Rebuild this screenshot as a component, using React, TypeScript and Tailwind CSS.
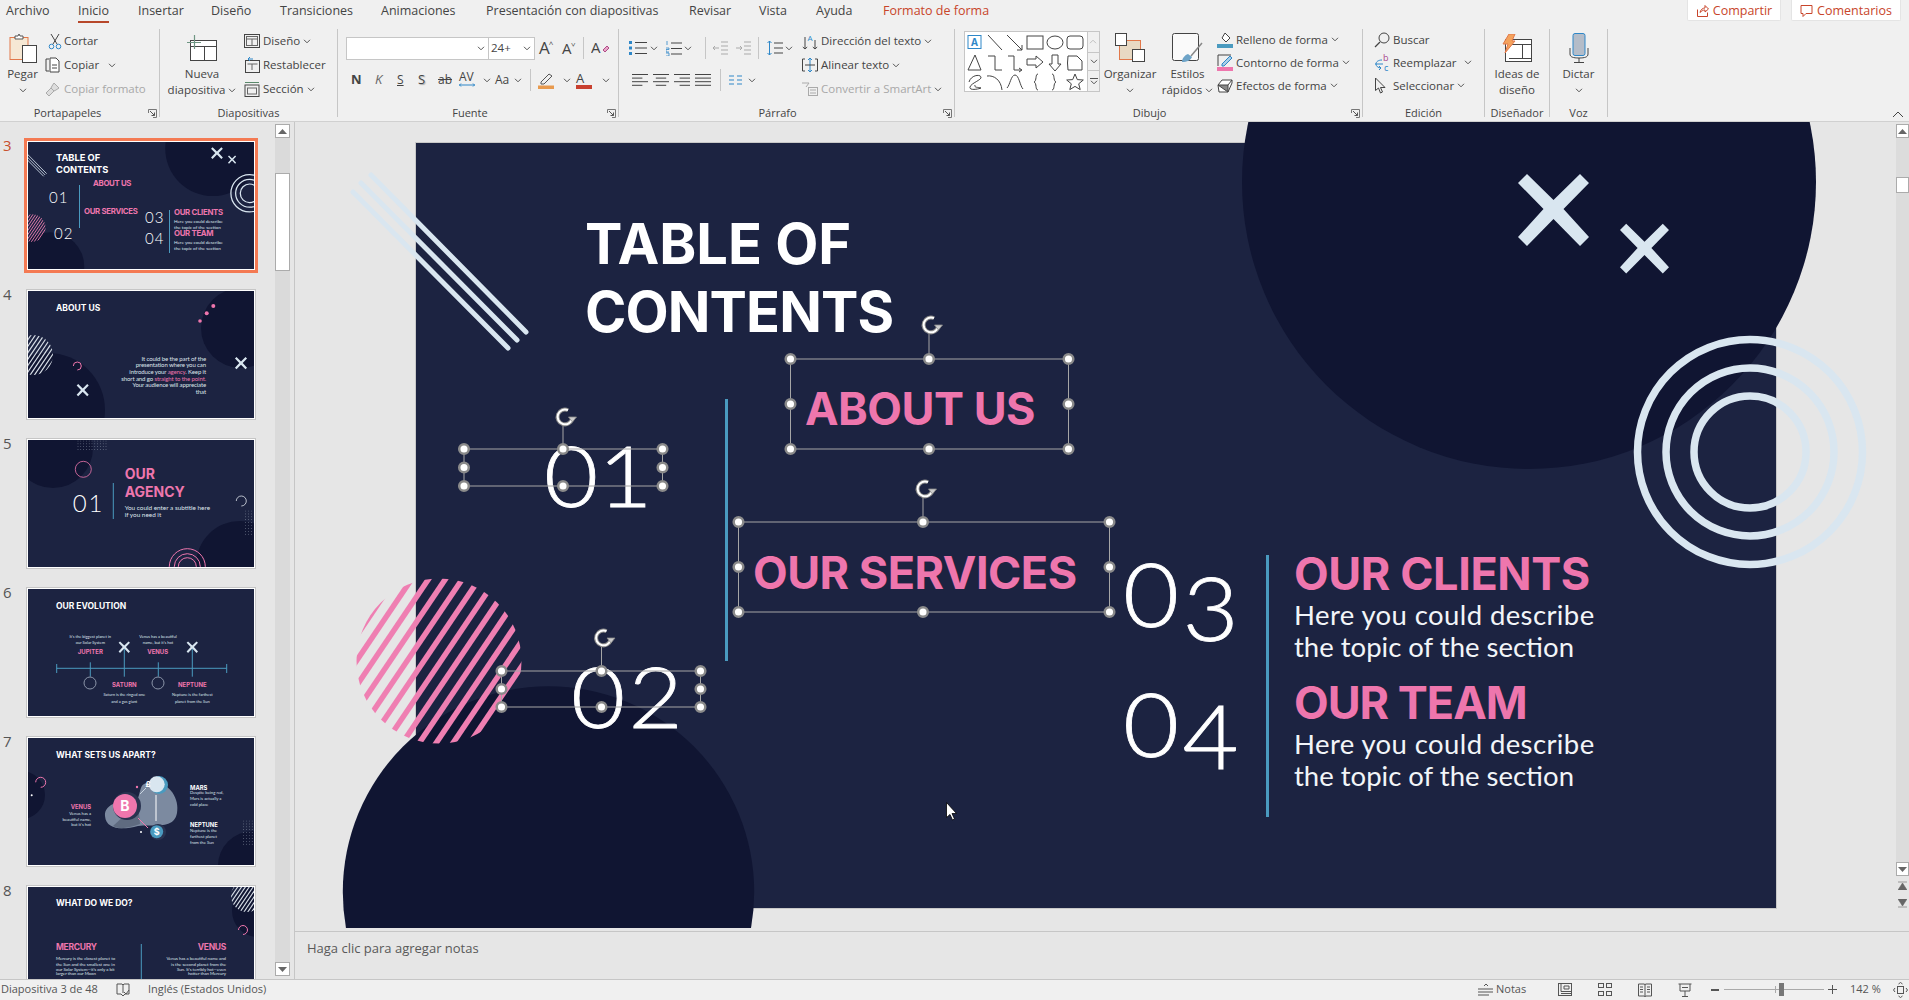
import React from 'react';

const LIGHT = '#d9e6f0';
const DARK = '#101532';
const PINK = '#ee76ad';
const BLUE = '#4a9abf';

const Chev = ({ c = '' }: { c?: string }) => (
  <svg className={`shrink-0 ${c}`} width="8" height="5" viewBox="0 0 8 5" fill="none">
    <path d="M1 .8l3 3 3-3" stroke="#555" strokeWidth="1" />
  </svg>
);
const Sep = ({ c = '' }: { c?: string }) => <span className={`block w-px h-[22px] bg-[#c6c6c6] shrink-0 ${c}`} />;

const S = ({ w, h, children, c = '' }: { w: number; h: number; children: React.ReactNode; c?: string }) => (
  <svg className={`shrink-0 ${c}`} width={w} height={h} viewBox={`0 0 ${w} ${h}`} fill="none">
    {children}
  </svg>
);

const Launcher = () => (
  <svg className="absolute right-[2px] top-[3px]" width="9" height="9" viewBox="0 0 9 9" fill="none">
    <path d="M.5 4V.5h8v8H5" stroke="#777" />
    <path d="M2 2l4.5 4.5M6.5 3.5v3h-3" stroke="#555" />
  </svg>
);

function Group({ w, label, pr = '', launcher, children }: { w: string; label: string; pr?: string; launcher?: boolean; children: React.ReactNode }) {
  return (
    <div className={`${w} h-[88px] shrink-0 border-r border-[#c6c6c6] flex flex-col`}>
      <div className="h-[77px] flex">{children}</div>
      <div className={`relative h-[11px] text-center text-[11px] leading-[14px] text-[#444] ${pr}`}>
        {label}
        {launcher && <Launcher />}
      </div>
    </div>
  );
}

function BigBtn({ w, icon, l1, l2, chev }: { w: string; icon: React.ReactNode; l1: string; l2?: string; chev?: boolean }) {
  return (
    <div className={`${w} shrink-0 flex flex-col items-center text-[11.5px] leading-[16px] text-[#444]`}>
      <div className="h-[37px] flex items-center justify-center">{icon}</div>
      <div className="whitespace-nowrap">{l1}</div>
      <div className="h-[16px] flex items-center gap-[3px] whitespace-nowrap">
        {l2}
        {chev && <Chev />}
      </div>
    </div>
  );
}

function Row({ icon, text, chev, h = 'h-[24px]', gray, gap = 'gap-[3px]', c = '' }: { icon: React.ReactNode; text: string; chev?: boolean; h?: string; gray?: boolean; gap?: string; c?: string }) {
  return (
    <div className={`${h} flex items-center text-[11.5px] whitespace-nowrap ${gray ? 'text-[#a8a8a8]' : 'text-[#444]'} ${c}`}>
      <span className="w-[19px] shrink-0 flex items-center">{icon}</span>
      <span className={`flex items-center ${gap}`}>
        {text}
        {chev && <Chev />}
      </span>
    </div>
  );
}

const Bars = ({ w, kind }: { w: number; kind: 'l' | 'c' | 'r' | 'j' }) => {
  const ws = kind === 'j' ? [1, 1, 1, 1] : [1, 0.65, 1, 0.65];
  return (
    <S w={w} h={14}>
      {ws.map((f, i) => {
        const len = w * f;
        const x = kind === 'l' || kind === 'j' ? 0 : kind === 'c' ? (w - len) / 2 : w - len;
        return <line key={i} x1={x} x2={x + len} y1={1.5 + i * 3.6} y2={1.5 + i * 3.6} stroke="#444" />;
      })}
    </S>
  );
};

const TABS: [string, string][] = [
  ['Archivo', 'w-[72px]'],
  ['Inicio', 'w-[60px]'],
  ['Insertar', 'w-[73px]'],
  ['Diseño', 'w-[69px]'],
  ['Transiciones', 'w-[101px]'],
  ['Animaciones', 'w-[105px]'],
  ['Presentación con diapositivas', 'w-[203px]'],
  ['Revisar', 'w-[70px]'],
  ['Vista', 'w-[57px]'],
  ['Ayuda', 'w-[67px]'],
];

function TabsBar() {
  return (
    <div className="flex h-[24px] shrink-0 bg-[#f0f0f0] pl-[6px] text-[12.5px] leading-[21px] text-[#444]">
      {TABS.map(([t, w]) => (
        <div key={t} className={`${w} shrink-0 whitespace-nowrap`}>
          {t === 'Inicio' ? <span className="inline-block h-[22.5px] border-b-2 border-[#b7472a]">{t}</span> : t}
        </div>
      ))}
      <div className="text-[#c8452a] whitespace-nowrap">Formato de forma</div>
      <div className="ml-auto flex gap-[10px] pr-[8px] text-[#c8452a]">
        <div className="w-[94px] h-[21px] bg-white border-b border-x border-[#e4e4e4] flex items-center justify-center gap-[4px] rounded-b-[2px]">
          <S w={13} h={13}>
            <path d="M1.5 5.5v7h10v-4" stroke="#c8452a" />
            <path d="M4 8.5C4.5 5.5 7 4 9 4V1.5l3.5 3.5L9 8V6C7 6 5.5 7 4 8.5Z" stroke="#c8452a" />
          </S>
          Compartir
        </div>
        <div className="w-[110px] h-[21px] bg-white border-b border-x border-[#e4e4e4] flex items-center justify-center gap-[4px] rounded-b-[2px]">
          <S w={13} h={13}>
            <path d="M1 1.5h11v8H6l-3 3v-3H1z" stroke="#c8452a" />
          </S>
          Comentarios
        </div>
      </div>
    </div>
  );
}

const GalleryShapes = () => (
  <svg width="122" height="59" viewBox="0 0 122 59" fill="none" stroke="#444" strokeWidth="1" className="shrink-0">
    <rect x="3" y="3.500" width="13" height="13" stroke="#2e87c8" />
    <text x="9.500" y="14" fontSize="10" fontWeight="700" fill="#2e87c8" stroke="none" textAnchor="middle" fontFamily="Open Sans, sans-serif">A</text>
    <line x1="23" y1="3" x2="37" y2="18" />
    <path d="M42 3l15 15M57 13v5h-5" />
    <rect x="62" y="4" width="16" height="13" />
    <ellipse cx="90" cy="10.500" rx="8" ry="6.500" />
    <rect x="102" y="4" width="16" height="13" rx="3" />
    <path d="M10 23l6 15H3z" />
    <path d="M23 24h7v14h7" />
    <path d="M43 24h6v14h7M54 36l3 2-3 2" />
    <path d="M62 27h9v-3l7 6-7 6v-3h-9z" />
    <path d="M87 23h6v9h3l-6 7-6-7h3z" />
    <path d="M103 24h9l5 5v9h-14q-1-7 0-14z" />
    <path d="M4 50c2-7 11-8 12-5s-10 6-11 10 9 2 11 1c-3-1-7 0-6-3" stroke="#444" />
    <path d="M22 44c7-1 14 4 15 14" />
    <path d="M42 56c3-3 4-13 8-13s5 11 8 14" />
    <path d="M73 42c-3 0-1 7-4 8 3 1 1 8 4 8" />
    <path d="M87 42c3 0 1 7 4 8-3 1-1 8-4 8" />
    <path d="M110 42l2.300 5.600 6 .4-4.600 3.800 1.500 5.800-5.200-3.200-5.200 3.200 1.500-5.800-4.600-3.800 6-.4z" />
  </svg>
);

function Ribbon() {
  return (
    <div className="relative flex h-[97px] shrink-0 bg-[#f0f0f0] pt-[5px]">
      <Group w="w-[160px]" label="Portapapeles" pr="pr-[24px]" launcher>
        <BigBtn
          w="w-[45px]"
          l1="Pegar"
          chev
          icon={
            <S w={28} h={30}>
              <rect x="1" y="4.500" width="18" height="22" fill="#f6e8d4" stroke="#e2784a" />
              <path d="M6 5V3h3l1-2 1 2h3v3H6z" fill="#fff" stroke="#555" />
              <rect x="13.500" y="12.500" width="14" height="17" fill="#fff" stroke="#444" />
            </S>
          }
        />
        <div className="flex flex-col">
          <Row
            text="Cortar"
            icon={
              <S w={14} h={17} c="ml-[3px]">
                <path d="M3 1l6 10M11 1L5 11" stroke="#444" />
                <circle cx="3.500" cy="13.500" r="2.300" stroke="#2e87c8" />
                <circle cx="10.500" cy="13.500" r="2.300" stroke="#2e87c8" />
              </S>
            }
          />
          <div className="flex items-center">
            <Row
              text="Copiar"
              icon={
                <S w={16} h={16}>
                  <path d="M4 2H1v12h3" stroke="#444" />
                  <path d="M5 1h6l3 3v11H5z" fill="#fff" stroke="#444" />
                  <path d="M7 8h5M7 11h5" stroke="#444" />
                </S>
              }
            />
            <Chev c="ml-[9px]" />
          </div>
          <Row
            text="Copiar formato"
            gray
            icon={
              <S w={16} h={16}>
                <path d="M9 2l5 5-3 2-2 1-3-3 1-2zM6 7l-5 5 3 3 5-5" stroke="#aaa" fill="#ddd" />
              </S>
            }
          />
        </div>
      </Group>

      <Group w="w-[178px]" label="Diapositivas">
        <BigBtn
          w="w-[84px]"
          l1="Nueva"
          l2="diapositiva"
          chev
          icon={
            <S w={30} h={26}>
              <rect x="3.500" y="5.500" width="26" height="20" fill="#fff" stroke="#444" />
              <path d="M3 11.500h26M17.500 11.500v14" stroke="#444" />
              <path d="M7.500 0v14M0 7.500h14" stroke="#6f9684" strokeWidth="1.200" />
            </S>
          }
        />
        <div className="flex flex-col">
          <Row
            text="Diseño"
            chev
            icon={
              <S w={16} h={14}>
                <rect x=".5" y=".5" width="15" height="13" stroke="#444" />
                <rect x="2.500" y="2.500" width="11" height="9" stroke="#666" />
                <path d="M2.500 5h11M8 5v6" stroke="#666" />
              </S>
            }
          />
          <Row
            text="Restablecer"
            icon={
              <S w={16} h={16}>
                <rect x="1.500" y="3.500" width="14" height="12" stroke="#444" />
                <path d="M4 2h5M4 2l2-2M4 2l2 2" stroke="#2e87c8" />
                <path d="M3.500 7h10M8 7v6" stroke="#666" />
              </S>
            }
          />
          <Row
            text="Sección"
            chev
            icon={
              <S w={16} h={16}>
                <path d="M1 1.500h14" stroke="#5b8a6c" />
                <rect x="1" y="4" width="14" height="11.500" stroke="#444" />
                <rect x="3.500" y="7" width="9" height="6" stroke="#666" />
              </S>
            }
          />
        </div>
      </Group>

      <Group w="w-[281px]" label="Fuente" pr="pr-[16px]" launcher>
        <div className="flex flex-col pt-[3px] text-[#444]">
          <div className="h-[32px] flex items-center pl-[8px]">
            <div className="w-[143px] h-[23px] shrink-0 bg-white border border-[#c6c6c6] flex items-center justify-end pr-[3px]">
              <Chev />
            </div>
            <div className="w-[46px] h-[23px] shrink-0 bg-white border border-l-0 border-[#c6c6c6] flex items-center justify-between pl-[2px] pr-[3px] text-[11.5px] leading-[20px]">
              <span>24+</span>
              <Chev />
            </div>
            <div className="w-[23px] ml-[4px] shrink-0 flex items-start text-[17px] leading-[18px]">
              A<span className="text-[8px] leading-[10px] -ml-px">^</span>
            </div>
            <div className="w-[21px] shrink-0 flex items-start text-[15px] leading-[18px]">
              A<span className="text-[8px] leading-[10px] rotate-180 -ml-px">^</span>
            </div>
            <Sep />
            <div className="ml-[7px]">
              <S w={18} h={18}>
                <text x="0" y="14" fontSize="15" fill="#444" fontFamily="Open Sans, sans-serif">A</text>
                <path d="M12 11l4-4 2 2-4 4z" fill="#e8a6c8" stroke="#b04a87" />
              </S>
            </div>
          </div>
          <div className="h-[32px] flex items-center pl-[13px] text-[13px]">
            <span className="w-[24px] font-bold">N</span>
            <span className="w-[22px] italic text-[#666]">K</span>
            <span className="w-[21px] underline text-[12px]">S</span>
            <span className="w-[20px] [text-shadow:1px_1px_1px_#aaa]">S</span>
            <span className="w-[21px] line-through text-[12px]">ab</span>
            <span className="w-[20px] relative">
              <span className="text-[12px] leading-none block -mt-[3px]">AV</span>
              <S w={16} h={4} c="block">
                <path d="M0 2h16M2 .5L.5 2 2 3.500M14 .5L15.500 2 14 3.500" stroke="#2e87c8" />
              </S>
            </span>
            <span className="w-[16px] flex justify-center"><Chev /></span>
            <span className="w-[19px] text-[12px]">Aa</span>
            <span className="w-[16px] flex"><Chev /></span>
            <Sep />
            <span className="w-[25px] ml-[7px]">
              <S w={18} h={18}>
                <path d="M3 11l8-8 3 2-8 8H3z" stroke="#555" />
                <rect x="0" y="14.500" width="16" height="3.500" fill="#e89a4e" />
              </S>
            </span>
            <span className="w-[13px]"><Chev /></span>
            <span className="w-[26px] flex flex-col items-start leading-[14px]">
              A
              <span className="block w-[16px] h-[4px] bg-[#c8402f]" />
            </span>
            <Chev />
          </div>
        </div>
      </Group>

      <Group w="w-[336px]" label="Párrafo" pr="pr-[18px]" launcher>
        <div className="w-[183px] shrink-0 flex flex-col pt-[3px]">
          <div className="h-[32px] flex items-center pl-[10px]">
            <span className="w-[21px]">
              <S w={18} h={14}>
                <rect x="0" y="0" width="3" height="3" fill="#2e87c8" />
                <rect x="0" y="5.500" width="3" height="3" fill="#2e87c8" />
                <rect x="0" y="11" width="3" height="3" fill="#2e87c8" />
                <path d="M6 1.500h12M6 7h12M6 12.500h12" stroke="#444" />
              </S>
            </span>
            <span className="w-[16px]"><Chev /></span>
            <span className="w-[18px]">
              <S w={16} h={15}>
                <path d="M1 0v4M0 7h3v1.500H0V11h3M0 12h3v3H0" stroke="#2e87c8" strokeWidth=".8" />
                <path d="M5 2h11M5 7.500h11M5 13h11" stroke="#444" />
              </S>
            </span>
            <span className="w-[21px]"><Chev /></span>
            <Sep />
            <span className="w-[23px] ml-[7px]">
              <S w={15} h={14}>
                <path d="M0 7h6M0 7l2-2M0 7l2 2M8 1h7M8 5h7M8 9h7M8 13h7" stroke="#aaa" />
              </S>
            </span>
            <span className="w-[22px]">
              <S w={15} h={14}>
                <path d="M0 7h6M6 7L4 5M6 7L4 9M8 1h7M8 5h7M8 9h7M8 13h7" stroke="#aaa" />
              </S>
            </span>
            <Sep />
            <span className="w-[18px] ml-[8px]">
              <S w={16} h={16}>
                <path d="M2.500 1v14M.5 3l2-2 2 2M.5 13l2 2 2-2" stroke="#2e87c8" />
                <path d="M7 3h9M7 8h9M7 13h9" stroke="#444" />
              </S>
            </span>
            <Chev />
          </div>
          <div className="h-[32px] flex items-center pl-[13px]">
            <span className="w-[21px]"><Bars w={16} kind="l" /></span>
            <span className="w-[21px]"><Bars w={16} kind="c" /></span>
            <span className="w-[21px]"><Bars w={16} kind="r" /></span>
            <span className="w-[25px]"><Bars w={16} kind="j" /></span>
            <Sep />
            <span className="w-[19px] ml-[8px]">
              <S w={13} h={10}>
                <path d="M0 1h5M0 5h5M0 9h5M8 1h5M8 5h5M8 9h5" stroke="#2e87c8" />
              </S>
            </span>
            <Chev />
          </div>
        </div>
        <div className="flex flex-col">
          <Row
            text="Dirección del texto"
            chev
            icon={
              <S w={16} h={17}>
                <path d="M3 4v12M.8 14l2.200 2 2.200-2M13 7v9M10.800 14l2.200 2 2.200-2" stroke="#444" />
                <text x="8" y="8" fontSize="8" fill="#2e87c8" textAnchor="middle" fontFamily="Open Sans, sans-serif">A</text>
              </S>
            }
          />
          <Row
            text="Alinear texto"
            chev
            icon={
              <S w={16} h={16}>
                <path d="M3 2H.5v12H3M13 2h2.500v12H13" stroke="#444" />
                <path d="M8 1v14M6 3l2-2 2 2M6 13l2 2 2-2" stroke="#2e87c8" />
                <path d="M3 8h10" stroke="#444" />
              </S>
            }
          />
          <Row
            text="Convertir a SmartArt"
            chev
            gray
            icon={
              <S w={16} h={14}>
                <path d="M0 1h7L4 5" stroke="#aaa" />
                <rect x="6.500" y="5.500" width="9" height="8" stroke="#aaa" />
                <path d="M8 8h6M8 11h6" stroke="#aaa" />
              </S>
            }
          />
        </div>
      </Group>

      <Group w="w-[408px]" label="Dibujo" pr="pr-[18px]" launcher>
        <div className="ml-[9px] mt-[2px] h-[61px] w-[136px] shrink-0 bg-white border border-[#c6c6c6] flex">
          <GalleryShapes />
          <div className="w-[13px] flex flex-col border-l border-[#c6c6c6] bg-[#f0f0f0]">
            <div className="h-[20px] flex items-center justify-center rotate-180"><Chev c="opacity-30" /></div>
            <div className="h-[19px] flex items-center justify-center border-y border-[#c6c6c6]"><Chev /></div>
            <div className="flex-1 flex flex-col items-center justify-center gap-px">
              <span className="block w-[8px] h-px bg-[#555]" />
              <Chev />
            </div>
          </div>
        </div>
        <BigBtn
          w="w-[60px]"
          l1="Organizar"
          chev
          icon={
            <S w={30} h={29}>
              <rect x="4.500" y="7.500" width="21" height="19" fill="#e8d9c3" stroke="#e2784a" />
              <rect x=".5" y=".5" width="11" height="12" fill="#fff" stroke="#444" />
              <rect x="17.500" y="16.500" width="12" height="12" fill="#fff" stroke="#444" />
            </S>
          }
        />
        <BigBtn
          w="w-[55px]"
          l1="Estilos"
          l2="rápidos"
          chev
          icon={
            <S w={31} h={30}>
              <rect x=".5" y=".5" width="26" height="27" rx="2" fill="#fafafa" stroke="#444" />
              <path d="M30 10L19 23" stroke="#888" strokeWidth="1.500" />
              <path d="M10 29c0-4 3-7 6-8l4 3c-1 3-5 5-10 5z" fill="#6ea4c8" />
            </S>
          }
        />
        <div className="ml-[2px] -mt-[1px] flex flex-col">
          <Row
            h="h-[23px]"
            text="Relleno de forma"
            chev
            icon={
              <S w={16} h={16}>
                <path d="M8 1l5 5-4 4-4-4z" fill="#fff" stroke="#444" />
                <rect x="0" y="12" width="16" height="4" fill="#4a9abf" />
              </S>
            }
          />
          <Row
            h="h-[23px]"
            text="Contorno de forma"
            chev
            icon={
              <S w={16} h={17}>
                <path d="M1 1h13" stroke="#444" />
                <path d="M1 1v11" stroke="#444" />
                <path d="M5 10l8-8 2 2-8 8H5z" fill="#a8cfe8" stroke="#2e87c8" />
                <rect x="0" y="13" width="16" height="4" fill="#ee76ad" />
              </S>
            }
          />
          <Row
            h="h-[23px]"
            text="Efectos de forma"
            chev
            icon={
              <S w={16} h={14}>
                <path d="M1 6l4-5h10v3l-4 9H2z" fill="#fff" stroke="#444" />
                <path d="M1 6h10v7zM11 6l4-5" stroke="#444" fill="#888" />
              </S>
            }
          />
        </div>
      </Group>

      <Group w="w-[122px]" label="Edición">
        <div className="ml-[11px] -mt-[1px] flex flex-col">
          <Row
            h="h-[23px]"
            text="Buscar"
            icon={
              <S w={16} h={16}>
                <circle cx="10" cy="6" r="5" stroke="#444" />
                <path d="M6 10l-5 5" stroke="#444" strokeWidth="1.200" />
              </S>
            }
          />
          <div className="flex items-center">
            <Row
              h="h-[23px]"
              text="Reemplazar"
              icon={
                <S w={16} h={18}>
                  <path d="M8 6c-4 0-6 2-6 4s2 4 5 4M5 12l2 2-2 2M1 10h8" stroke="#2e87c8" />
                  <text x="9" y="7" fontSize="9" fill="#a8488c" fontFamily="Open Sans, sans-serif">b</text>
                  <text x="10" y="17" fontSize="9" fill="#2e87c8" fontFamily="Open Sans, sans-serif">c</text>
                </S>
              }
            />
            <Chev c="ml-[8px]" />
          </div>
          <Row
            h="h-[23px]"
            text="Seleccionar"
            chev
            icon={
              <S w={12} h={18}>
                <path d="M1.500 1v12.500l3-2.500 2 5 2-1-2-4.500H11z" stroke="#444" />
              </S>
            }
          />
        </div>
      </Group>

      <Group w="w-[65px]" label="Diseñador">
        <BigBtn
          w="w-full"
          l1="Ideas de"
          l2="diseño"
          icon={
            <S w={30} h={28}>
              <rect x="3.500" y="5.500" width="26" height="22" fill="#fff" stroke="#444" />
              <path d="M10 10.500h19M20.500 10.500v14M7 24.500h22" stroke="#444" />
              <path d="M7 0h6l-3 7h3L3 19l3-9H1z" fill="#f4a25c" stroke="#e2784a" />
            </S>
          }
        />
      </Group>

      <Group w="w-[58px]" label="Voz">
        <BigBtn
          w="w-full"
          l1="Dictar"
          chev
          icon={
            <S w={20} h={30}>
              <rect x="4" y=".5" width="12" height="22" rx="2" fill="#b4bcc8" stroke="#2e87c8" />
              <path d="M1 15v6c0 3 3 4 9 4s9-1 9-4v-6M10 25v4M5 29.500h10" stroke="#444" />
            </S>
          }
        />
      </Group>

      <div className="absolute right-[5px] bottom-[3px]">
        <S w={12} h={7}>
          <path d="M1 6l5-5 5 5" stroke="#444" />
        </S>
      </div>
    </div>
  );
}

const Tri = ({ down }: { down?: boolean }) => (
  <S w={9} h={5} c={down ? 'rotate-180' : ''}>
    <path d="M4.500 0L9 5H0z" fill="#666" />
  </S>
);

const Xm = ({ cx, cy, s, fill = LIGHT }: { cx: number; cy: number; s: number; fill?: string }) => {
  const pts = [[-35.5, -26], [-26.5, -35], [0, -9], [26.5, -35], [35.5, -26], [10, 0], [35.5, 28], [26.5, 37], [0, 10], [-26.5, 37], [-35.5, 28], [-10, 0]];
  return <polygon fill={fill} points={pts.map(([x, y]) => `${cx + x * s},${cy + y * s}`).join(' ')} />;
};

function Stripes({ id, cx, cy, r, color, p, w }: { id: string; cx: number; cy: number; r: number; color: string; p: number; w: number }) {
  const a = (56 * Math.PI) / 180;
  const nx = Math.sin(a);
  const ny = Math.cos(a);
  const dx = Math.cos(a);
  const dy = -Math.sin(a);
  const ds: number[] = [];
  for (let d = -r; d <= r; d += p) ds.push(d);
  return (
    <g>
      <clipPath id={id}>
        <circle cx={cx} cy={cy} r={r} />
      </clipPath>
      <g clipPath={`url(#${id})`} stroke={color} strokeWidth={w}>
        {ds.map((d) => (
          <line key={d} x1={cx + nx * d - dx * r * 1.2} y1={cy + ny * d - dy * r * 1.2} x2={cx + nx * d + dx * r * 1.2} y2={cy + ny * d + dy * r * 1.2} />
        ))}
      </g>
    </g>
  );
}

const Arc = ({ cx, cy, r, color, w = 1 }: { cx: number; cy: number; r: number; color: string; w?: number }) => (
  <path d={`M${cx - r} ${cy} A${r} ${r} 0 1 1 ${cx} ${cy + r}`} stroke={color} strokeWidth={w} fill="none" />
);

const Dots = ({ x, y, cols, rows, step, r = 0.35, color = '#c8d4e0' }: { x: number; y: number; cols: number; rows: number; step: number; r?: number; color?: string }) => (
  <g fill={color}>
    {Array.from({ length: cols * rows }).map((_, i) => (
      <circle key={i} cx={x + (i % cols) * step} cy={y + Math.floor(i / cols) * step} r={r} />
    ))}
  </g>
);

function Slide3Deco({ id }: { id: string }) {
  return (
    <>
      <circle cx="1529" cy="182" r="287" fill={DARK} />
      <circle cx="548.500" cy="892" r="205.700" fill={DARK} />
      <g stroke={LIGHT} strokeWidth="5" strokeLinecap="round">
        <line x1="371" y1="175" x2="526" y2="332" />
        <line x1="361" y1="183" x2="517" y2="340" />
        <line x1="353" y1="192" x2="508" y2="348" />
      </g>
      <Stripes id={id} cx={439} cy={661} r={82.5} color="#ef7fb2" p={14} w={5.5} />
      <g stroke={LIGHT} strokeWidth="7.500" fill="none">
        <circle cx="1750" cy="452" r="112.500" />
        <circle cx="1750" cy="452" r="84" />
        <circle cx="1750" cy="452" r="56" />
      </g>
      <Xm cx={1553.5} cy={209} s={1} />
      <Xm cx={1644.5} cy={248} s={0.69} />
    </>
  );
}

function Frame({ x1, y1, x2, y2, cx, ry }: { x1: number; y1: number; x2: number; y2: number; cx: number; ry: number }) {
  const my = (y1 + y2) / 2;
  const hs = [[x1, y1], [cx, y1], [x2, y1], [x1, my], [x2, my], [x1, y2], [cx, y2], [x2, y2]];
  return (
    <g>
      <rect x={x1} y={y1} width={x2 - x1} height={y2 - y1} fill="none" stroke="#a6a6a6" strokeWidth="1" />
      <line x1={cx} y1={y1} x2={cx} y2={ry + 8} stroke="#a6a6a6" />
      <g transform={`translate(${cx + 2} ${ry})`} fill="none">
        <path d="M3 -6.800 A7.400 7.400 0 1 0 7.200 1.500" stroke="#8a8a8a" strokeWidth="4" />
        <path d="M3 -6.800 A7.400 7.400 0 1 0 7.200 1.500" stroke="#fff" strokeWidth="2" />
        <path d="M3.500 0h8l-4 5z" fill="#ccc" stroke="#888" strokeWidth=".8" />
      </g>
      {hs.map(([x, y], i) => (
        <circle key={i} cx={x} cy={y} r="4.800" fill="#fff" stroke="#8a8a8a" strokeWidth="2.500" />
      ))}
    </g>
  );
}

const H = "absolute leading-none whitespace-nowrap font-['Inter',sans-serif] font-bold";
const B = "absolute leading-none whitespace-nowrap font-['Lato',sans-serif]";
const NUM = "absolute leading-none whitespace-nowrap font-['Lato',sans-serif] font-light text-white origin-left scale-x-[1.1] [-webkit-text-stroke:0.8px_white]";
const TW = "absolute leading-none whitespace-nowrap -translate-y-1/2 text-white font-['Inter',sans-serif] font-bold";
const TP = "absolute leading-none whitespace-nowrap -translate-y-1/2 text-[#ee76ad] font-['Inter',sans-serif] font-bold";
const TD = "absolute leading-none whitespace-nowrap -translate-y-1/2 text-[#dfe5ec] font-['Lato',sans-serif]";
const TN = "absolute leading-none whitespace-nowrap -translate-y-1/2 text-white font-['Lato',sans-serif] font-light tracking-[1px]";
const CX = '-translate-x-1/2';

function Canvas() {
  return (
    <div className="absolute left-[-295px] top-[-122px] w-[1909px] h-[1000px]">
      <div className="absolute left-[416px] top-[143px] w-[1360px] h-[765px] bg-[#1c2341] outline outline-1 outline-[#c8c8c8]" />
      <svg className="absolute left-0 top-0" width="1909" height="1000" viewBox="0 0 1909 1000">
        <Slide3Deco id="main-stripes" />
      </svg>
      <div className={`${H} left-[585px] top-[216px] text-[56px] text-white`}>TABLE OF</div>
      <div className={`${H} left-[585px] top-[284px] text-[56px] text-white tracking-[-0.9px]`}>CONTENTS</div>
      <div className="absolute left-[725px] top-[399px] w-[3px] h-[262px] bg-[#4a9abf]" />
      <div className="absolute left-[1266px] top-[555px] w-[3px] h-[262px] bg-[#4a9abf]" />
      <div className={`${H} left-[805px] top-[386px] text-[45px] text-[#ee76ad] tracking-[-0.5px]`}>ABOUT US</div>
      <div className={`${H} left-[753px] top-[550px] text-[45px] text-[#ee76ad] tracking-[-0.5px]`}>OUR SERVICES</div>
      <div className={`${H} left-[1294px] top-[551px] text-[45px] text-[#ee76ad] tracking-[-0.4px]`}>OUR CLIENTS</div>
      <div className={`${H} left-[1294px] top-[680px] text-[45px] text-[#ee76ad] tracking-[-1px]`}>OUR TEAM</div>
      <div className={`${B} left-[1294px] top-[601px] text-[27.5px] text-[#f2f5f8] tracking-[0.4px]`}>Here you could describe</div>
      <div className={`${B} left-[1294px] top-[633px] text-[27.5px] text-[#f2f5f8]`}>the topic of the section</div>
      <div className={`${B} left-[1294px] top-[730px] text-[27.5px] text-[#f2f5f8] tracking-[0.4px]`}>Here you could describe</div>
      <div className={`${B} left-[1294px] top-[762px] text-[27.5px] text-[#f2f5f8]`}>the topic of the section</div>
      <div className={`${NUM} left-[544px] top-[432px] text-[85px]`}>01</div>
      <div className={`${NUM} left-[571px] top-[653px] text-[85px] tracking-[3px]`}>02</div>
      <div className={`${NUM} left-[1123px] top-[549px] text-[88px] tracking-[3px]`}>
        0<span className="relative top-[14px]">3</span>
      </div>
      <div className={`${NUM} left-[1123px] top-[679px] text-[88px] tracking-[3px]`}>
        0<span className="relative top-[12px]">4</span>
      </div>
      <svg className="absolute left-0 top-0" width="1909" height="1000" viewBox="0 0 1909 1000">
        <Frame x1={790.5} y1={359} x2={1068.5} y2={449} cx={929} ry={325} />
        <Frame x1={464} y1={449} x2={662.5} y2={486} cx={563} ry={417} />
        <Frame x1={738.5} y1={522} x2={1109.5} y2={612} cx={923} ry={489} />
        <Frame x1={501.5} y1={671} x2={700.5} y2={707} cx={601.5} ry={638} />
        <path d="M946.500 802.500v15l3.500-3 2.500 5.500 2-1-2.500-5.500h4.500z" fill="#fff" stroke="#000" strokeWidth=".8" />
      </svg>
    </div>
  );
}

function ThumbBox({ n, active, children }: { n: number; active?: boolean; children: React.ReactNode }) {
  return (
    <div className="flex h-[149px] shrink-0 pl-[3px]">
      <div className={`w-[21px] -mt-[3px] text-[15px] leading-[20px] ${active ? 'text-[#c8502f]' : 'text-[#555]'}`}>{n}</div>
      <div className={active ? 'h-[135px] border-[3px] border-[#f47a53] p-px bg-white' : 'ml-[2px] mt-[2px] h-[131px] border border-[#c6c6c6] p-px bg-white'}>
        <div className="relative w-[226px] h-[127px] overflow-hidden bg-[#1c2341]">{children}</div>
      </div>
    </div>
  );
}

const TS = ({ children }: { children: React.ReactNode }) => (
  <svg className="absolute left-0 top-0" width="226" height="127" viewBox="0 0 226 127" fill="none">
    {children}
  </svg>
);

function Thumb3() {
  return (
    <>
      <svg className="absolute left-0 top-0" width="226" height="127" viewBox="416 143 1360 765">
        <Slide3Deco id="t3-stripes" />
      </svg>
      <div className={`${TW} left-[28px] top-[16px] text-[9.3px]`}>TABLE OF</div>
      <div className={`${TW} left-[28px] top-[28px] text-[9.3px]`}>CONTENTS</div>
      <div className={`${TP} left-[65px] top-[42px] text-[7.8px] tracking-[-0.3px]`}>ABOUT US</div>
      <div className={`${TP} left-[56px] top-[70px] text-[7.8px] tracking-[-0.3px]`}>OUR SERVICES</div>
      <div className={`${TP} left-[146px] top-[71px] text-[7.8px] tracking-[-0.3px]`}>OUR CLIENTS</div>
      <div className={`${TP} left-[146px] top-[92px] text-[7.8px] tracking-[-0.3px]`}>OUR TEAM</div>
      <div className={`${TN} left-[21px] top-[55px] text-[15px]`}>01</div>
      <div className={`${TN} left-[26px] top-[91px] text-[15px]`}>02</div>
      <div className={`${TN} left-[117px] top-[75px] text-[15px]`}>03</div>
      <div className={`${TN} left-[117px] top-[96px] text-[15px]`}>04</div>
      <div className="absolute left-[51px] top-[43px] w-[1px] h-[43px] bg-[#4a9abf]" />
      <div className="absolute left-[141px] top-[68px] w-[1px] h-[43px] bg-[#4a9abf]" />
      <div className={`${TD} left-[146px] top-[79px] text-[4.6px]`}>Here you could describe</div>
      <div className={`${TD} left-[146px] top-[85px] text-[4.6px]`}>the topic of the section</div>
      <div className={`${TD} left-[146px] top-[100px] text-[4.6px]`}>Here you could describe</div>
      <div className={`${TD} left-[146px] top-[105.5px] text-[4.6px]`}>the topic of the section</div>
    </>
  );
}

function Thumb4() {
  return (
    <>
      <TS>
        <circle cx="213" cy="37" r="40" fill={DARK} />
        <circle cx="20" cy="119" r="57" fill={DARK} />
        <Stripes id="t4-stripes" cx={5} cy={64} r={20} color="#d9e0e8" p={3.6} w={1.2} />
        <circle cx="185.300" cy="15" r="2" fill={PINK} />
        <circle cx="178.700" cy="22.300" r="2" fill={PINK} />
        <circle cx="172" cy="30" r="1.800" fill={PINK} />
        <Arc cx={49.3} cy={75} r={4} color={PINK} />
        <Xm cx={54.7} cy={99} s={0.17} />
        <Xm cx={213} cy={72} s={0.17} />
      </TS>
      <div className={`${TW} left-[28px] top-[16.700px] text-[8.500px]`}>ABOUT US</div>
      <div className={`${TD} right-[48px] top-[67.500px] text-[6px] tracking-[-0.1px]`}>It could be the part of the</div>
      <div className={`${TD} right-[48px] top-[73.500px] text-[6px] tracking-[-0.1px]`}>presentation where you can</div>
      <div className={`${TD} right-[48px] top-[80.500px] text-[6px] tracking-[-0.1px]`}>
        introduce your <span className="text-[#ee76ad]">agency</span>. Keep it
      </div>
      <div className={`${TD} right-[48px] top-[87.500px] text-[6px] tracking-[-0.1px]`}>
        short and go <span className="text-[#ee76ad]">straight to the point.</span>
      </div>
      <div className={`${TD} right-[48px] top-[94px] text-[6px] tracking-[-0.1px]`}>Your audience will appreciate</div>
      <div className={`${TD} right-[48px] top-[101px] text-[6px] tracking-[-0.1px]`}>that</div>
    </>
  );
}

function Thumb5() {
  return (
    <>
      <TS>
        <circle cx="25" cy="8" r="40" fill={DARK} />
        <circle cx="212" cy="125" r="44" fill={DARK} />
        <Dots x={50} y={1} cols={11} rows={4} step={2.800} />
        <circle cx="55.300" cy="29.300" r="8" stroke={PINK} strokeWidth=".8" />
        <Arc cx={213.3} cy={61} r={5} color="#dfe5ec" w={0.8} />
        <Dots x={217.500} y={71} cols={3} rows={9} step={2.900} />
        <g stroke={PINK} strokeWidth="1">
          <circle cx="159.300" cy="126.700" r="18" />
          <circle cx="159.300" cy="126.700" r="13" />
          <circle cx="159.300" cy="126.700" r="9" />
        </g>
        <line x1="85.300" y1="43" x2="85.300" y2="79" stroke={BLUE} />
      </TS>
      <div className={`${TN} left-[44.700px] top-[62.700px] text-[24px] tracking-[2px]`}>01</div>
      <div className={`${TP} left-[96.700px] top-[34.300px] text-[14px]`}>OUR</div>
      <div className={`${TP} left-[96.700px] top-[52.300px] text-[14px]`}>AGENCY</div>
      <div className={`${TD} left-[96.700px] top-[68.300px] text-[6.400px]`}>You could enter a subtitle here</div>
      <div className={`${TD} left-[96.700px] top-[74.700px] text-[6.400px]`}>if you need it</div>
    </>
  );
}

function Thumb6() {
  return (
    <>
      <TS>
        <g stroke={BLUE}>
          <line x1="28.700" y1="79.300" x2="198.700" y2="79.300" />
          <line x1="28.700" y1="75" x2="28.700" y2="84" />
          <line x1="198.700" y1="75" x2="198.700" y2="84" />
          <line x1="62.300" y1="73.300" x2="62.300" y2="87.700" />
          <line x1="96.300" y1="57.700" x2="96.300" y2="87.700" />
          <line x1="130.300" y1="73.300" x2="130.300" y2="87.700" />
          <line x1="164.300" y1="57.700" x2="164.300" y2="87.700" />
        </g>
        <circle cx="62" cy="94" r="6" stroke="#8a94a8" />
        <circle cx="130" cy="94" r="6" stroke="#8a94a8" />
        <Xm cx={96.3} cy={58} s={0.16} />
        <Xm cx={164.3} cy={58} s={0.16} />
      </TS>
      <div className={`${TW} left-[28px] top-[16.700px] text-[8.500px]`}>OUR EVOLUTION</div>
      <div className={`${TP} ${CX} left-[62.300px] top-[63.300px] text-[6px]`}>JUPITER</div>
      <div className={`${TP} ${CX} left-[96.300px] top-[96.300px] text-[6px]`}>SATURN</div>
      <div className={`${TP} ${CX} left-[129.700px] top-[63.300px] text-[6px]`}>VENUS</div>
      <div className={`${TP} ${CX} left-[164.300px] top-[96.300px] text-[6px]`}>NEPTUNE</div>
      <div className={`${TD} ${CX} left-[62.300px] top-[48.300px] text-[4px]`}>It's the biggest planet in</div>
      <div className={`${TD} ${CX} left-[62.300px] top-[54.300px] text-[4px]`}>our Solar System</div>
      <div className={`${TD} ${CX} left-[130px] top-[48.300px] text-[4px]`}>Venus has a beautiful</div>
      <div className={`${TD} ${CX} left-[130px] top-[54.300px] text-[4px]`}>name, but it's hot</div>
      <div className={`${TD} ${CX} left-[96.300px] top-[106.300px] text-[4px]`}>Saturn is the ringed one</div>
      <div className={`${TD} ${CX} left-[96.300px] top-[112.600px] text-[4px]`}>and a gas giant</div>
      <div className={`${TD} ${CX} left-[164.300px] top-[106.300px] text-[4px]`}>Neptune is the farthest</div>
      <div className={`${TD} ${CX} left-[164.300px] top-[112.600px] text-[4px]`}>planet from the Sun</div>
    </>
  );
}

function Thumb7() {
  return (
    <>
      <TS>
        <circle cx="-7" cy="57" r="24" fill={DARK} />
        <circle cx="225" cy="128" r="35" fill={DARK} />
        <Dots x={215.500} y={83} cols={4} rows={9} step={2.900} />
        <Arc cx={12.7} cy={44.3} r={5} color={PINK} />
        <circle cx="3.700" cy="57.300" r="1" fill="#fff" />
        <path d="M118 45C140 40 152 60 149 75C146 92 125 86 110 88C95 92 78 92 77 78C76 65 95 62 110 60C113 52 112 47 118 45Z" fill="#7c8aa0" />
        <path d="M85 88L110 65L112 86C100 90 92 92 85 88Z" fill="#5f6b80" />
        <circle cx="99" cy="68" r="14" fill="#2a3350" />
        <circle cx="97" cy="68" r="12" fill={PINK} />
        <circle cx="131" cy="47" r="9" fill="#4a9abf" />
        <circle cx="128.700" cy="46.300" r="8" fill={LIGHT} />
        <circle cx="130" cy="94" r="8" fill="#2a3350" />
        <circle cx="128.700" cy="93.700" r="6.500" fill="#4a9abf" />
        <line x1="128" y1="57" x2="128" y2="83" stroke="#fff" />
        <line x1="110" y1="80" x2="120" y2="90" stroke={PINK} />
        <line x1="112" y1="56" x2="118" y2="50" stroke="#c8d4e0" />
        <circle cx="109" cy="49" r="1.200" fill={PINK} />
        <circle cx="113" cy="94" r="1" fill="#fff" />
        <text x="97" y="73" fontSize="14" fontWeight="700" fill="#fff" textAnchor="middle" fontFamily="Inter, sans-serif">B</text>
        <text x="128.700" y="97" fontSize="9" fontWeight="700" fill="#fff" textAnchor="middle" fontFamily="Inter, sans-serif">$</text>
        <text x="120" y="49" fontSize="8" fontWeight="700" fill="#fff" textAnchor="middle" fontFamily="Inter, sans-serif">£</text>
      </TS>
      <div className={`${TW} left-[28px] top-[16.700px] text-[8.500px]`}>WHAT SETS US APART?</div>
      <div className={`${TP} right-[163px] top-[69.300px] text-[5.800px]`}>VENUS</div>
      <div className={`${TD} right-[163px] top-[75.700px] text-[4.200px]`}>Venus has a</div>
      <div className={`${TD} right-[163px] top-[81.700px] text-[4.200px]`}>beautiful name,</div>
      <div className={`${TD} right-[163px] top-[87px] text-[4.200px]`}>but it's hot</div>
      <div className={`${TW} left-[162px] top-[49.700px] text-[5.800px] text-[#dfe5ec]`}>MARS</div>
      <div className={`${TD} left-[162px] top-[55.300px] text-[4.200px]`}>Despite being red,</div>
      <div className={`${TD} left-[162px] top-[61.300px] text-[4.200px]`}>Mars is actually a</div>
      <div className={`${TD} left-[162px] top-[66.700px] text-[4.200px]`}>cold place</div>
      <div className={`${TW} left-[162px] top-[87.300px] text-[5.800px] text-[#4a9abf]`}>NEPTUNE</div>
      <div className={`${TD} left-[162px] top-[93.300px] text-[4.200px]`}>Neptune is the</div>
      <div className={`${TD} left-[162px] top-[99px] text-[4.200px]`}>farthest planet</div>
      <div className={`${TD} left-[162px] top-[104.700px] text-[4.200px]`}>from the Sun</div>
    </>
  );
}

function Thumb8() {
  return (
    <>
      <TS>
        <circle cx="230" cy="24" r="26" fill={DARK} />
        <Stripes id="t8-stripes" cx={219} cy={9} r={16} color="#d9e0e8" p={3.2} w={1.1} />
        <Arc cx={215} cy={43} r={4.5} color={PINK} />
        <line x1="113.300" y1="57" x2="113.300" y2="127" stroke={BLUE} />
      </TS>
      <div className={`${TW} left-[28px] top-[16.300px] text-[8.500px]`}>WHAT DO WE DO?</div>
      <div className={`${TP} left-[28px] top-[59.700px] text-[8.500px] tracking-[-0.3px]`}>MERCURY</div>
      <div className={`${TP} right-[28px] top-[59.700px] text-[8.500px] tracking-[-0.3px]`}>VENUS</div>
      <div className={`${TD} left-[28px] top-[71.700px] text-[4.300px]`}>Mercury is the closest planet to</div>
      <div className={`${TD} left-[28px] top-[77.700px] text-[4.300px]`}>the Sun and the smallest one in</div>
      <div className={`${TD} left-[28px] top-[82.700px] text-[4.300px]`}>our Solar System—it's only a bit</div>
      <div className={`${TD} left-[28px] top-[87.300px] text-[4.300px]`}>larger than our Moon</div>
      <div className={`${TD} right-[28px] top-[71.700px] text-[4.300px]`}>Venus has a beautiful name and</div>
      <div className={`${TD} right-[28px] top-[77.700px] text-[4.300px]`}>is the second planet from the</div>
      <div className={`${TD} right-[28px] top-[82.700px] text-[4.300px]`}>Sun. It's terribly hot—even</div>
      <div className={`${TD} right-[28px] top-[87.300px] text-[4.300px]`}>hotter than Mercury</div>
    </>
  );
}

function SlidePanel() {
  return (
    <aside className="w-[295px] shrink-0 flex border-r border-[#c6c6c6] bg-[#e6e6e6]">
      <div className="w-[275px] shrink-0 pt-[16px] flex flex-col overflow-hidden">
        <ThumbBox n={3} active><Thumb3 /></ThumbBox>
        <ThumbBox n={4}><Thumb4 /></ThumbBox>
        <ThumbBox n={5}><Thumb5 /></ThumbBox>
        <ThumbBox n={6}><Thumb6 /></ThumbBox>
        <ThumbBox n={7}><Thumb7 /></ThumbBox>
        <ThumbBox n={8}><Thumb8 /></ThumbBox>
      </div>
      <div className="w-[15px] shrink-0 mt-[2px] mb-[3px] bg-[#dadada] flex flex-col">
        <div className="h-[14px] bg-white border border-[#ababab] flex items-center justify-center shrink-0"><Tri /></div>
        <div className="mt-[35px] h-[98px] bg-white border border-[#ababab] shrink-0" />
        <div className="mt-auto h-[14px] bg-white border border-[#ababab] flex items-center justify-center shrink-0"><Tri down /></div>
      </div>
    </aside>
  );
}

function RightScroll() {
  return (
    <div className="w-[13px] shrink-0 flex flex-col pt-[2px]">
      <div className="h-[752px] bg-[#dcdcdc] flex flex-col">
        <div className="h-[14px] bg-white border border-[#ababab] flex items-center justify-center shrink-0"><Tri /></div>
        <div className="mt-[39px] h-[16px] bg-white border border-[#ababab] shrink-0" />
        <div className="mt-auto h-[14px] bg-white border border-[#ababab] flex items-center justify-center shrink-0"><Tri down /></div>
      </div>
      <div className="flex flex-col items-center pt-[5px] gap-[9px]">
        <S w={9} h={9}>
          <path d="M0 1h9M4.500 2L9 9H0z" fill="#666" stroke="#666" strokeWidth=".6" />
        </S>
        <S w={9} h={9}>
          <path d="M0 8h9M4.500 7L9 0H0z" fill="#666" stroke="#666" strokeWidth=".6" />
        </S>
      </div>
    </div>
  );
}

function StatusBar() {
  return (
    <div className="h-[21px] shrink-0 flex items-center pb-px bg-[#f0f0f0] border-t border-[#c6c6c6] text-[11px] text-[#555] whitespace-nowrap">
      <span className="w-[116px] pl-px">Diapositiva 3 de 48</span>
      <span className="w-[32px]">
        <S w={14} h={14}>
          <path d="M1 1h5l1 1 1-1h5v10H9l-2 2-2-2H1zM7 2v8" stroke="#555" />
          <path d="M8 9l2 2 3-4" stroke="#555" />
        </S>
      </span>
      <span>Inglés (Estados Unidos)</span>
      <div className="ml-auto flex items-center">
        <span className="w-[18px]">
          <S w={15} h={13}>
            <path d="M6 3l2-2 2 2M0 6h15M0 9h15M0 12h11" stroke="#555" />
          </S>
        </span>
        <span className="w-[62px]">Notas</span>
        <span className="w-[40px]">
          <S w={14} h={13}>
            <rect x=".5" y=".5" width="13" height="12" stroke="#555" />
            <path d="M3 .5v8h10.500M3 10.500h10M6 3h5v3H6z" stroke="#555" />
          </S>
        </span>
        <span className="w-[40px]">
          <S w={14} h={13}>
            <rect x=".5" y=".5" width="5" height="4" stroke="#555" />
            <rect x="8.500" y=".5" width="5" height="4" stroke="#555" />
            <rect x=".5" y="8.500" width="5" height="4" stroke="#555" />
            <rect x="8.500" y="8.500" width="5" height="4" stroke="#555" />
          </S>
        </span>
        <span className="w-[40px]">
          <S w={14} h={14}>
            <path d="M.5 1h6l.5 1 .5-1h6v12h-6l-.5 1-.5-1h-6zM7 2v11M2 4h3M2 6.500h3M2 9h3M9 4h3M9 6.500h3M9 9h3" stroke="#555" />
          </S>
        </span>
        <span className="w-[33px]">
          <S w={14} h={14}>
            <path d="M.5 1h13M2 1v7h10V1M7 8v5M4 13.500h6M4 4.500h6" stroke="#555" />
          </S>
        </span>
        <span className="w-[13px]"><span className="block w-[8px] h-[2px] bg-[#555]" /></span>
        <span className="relative block w-[100px] h-px bg-[#aaa]">
          <span className="absolute left-[51px] -top-[3px] w-px h-[7px] bg-[#aaa]" />
          <span className="absolute left-[55px] -top-[6px] w-[5px] h-[13px] bg-[#777]" />
        </span>
        <span className="w-[26px] pl-[4px]">
          <S w={9} h={9}>
            <path d="M0 4.500h9M4.500 0v9" stroke="#555" />
          </S>
        </span>
        <span className="w-[43px]">142 %</span>
        <span className="w-[16px]">
          <S w={15} h={16}>
            <rect x="4.500" y="4.500" width="6" height="7" stroke="#555" />
            <path d="M5.500 2L7.500.5l2 1.500M5.500 14l2 1.500 2-1.500M2 6L.5 8 2 10M13 6l1.500 2-1.500 2" stroke="#555" />
          </S>
        </span>
      </div>
    </div>
  );
}

export default function App() {
  return (
    <div className="w-[1909px] h-[1000px] flex flex-col overflow-hidden bg-[#e6e6e6] font-['Open_Sans',sans-serif]">
      <TabsBar />
      <Ribbon />
      <main className="flex-1 flex min-h-0 border-t border-[#d0d0d0]">
        <SlidePanel />
        <section className="flex-1 flex flex-col min-w-0">
          <div className="h-[806px] shrink-0 flex">
            <div className="relative flex-1 overflow-hidden">
              <Canvas />
            </div>
            <RightScroll />
          </div>
          <div className="mt-[3px] flex-1 border-t border-[#c6c6c6] pl-[12px] pt-[7px] text-[13px] text-[#595959]">Haga clic para agregar notas</div>
        </section>
      </main>
      <StatusBar />
    </div>
  );
}
